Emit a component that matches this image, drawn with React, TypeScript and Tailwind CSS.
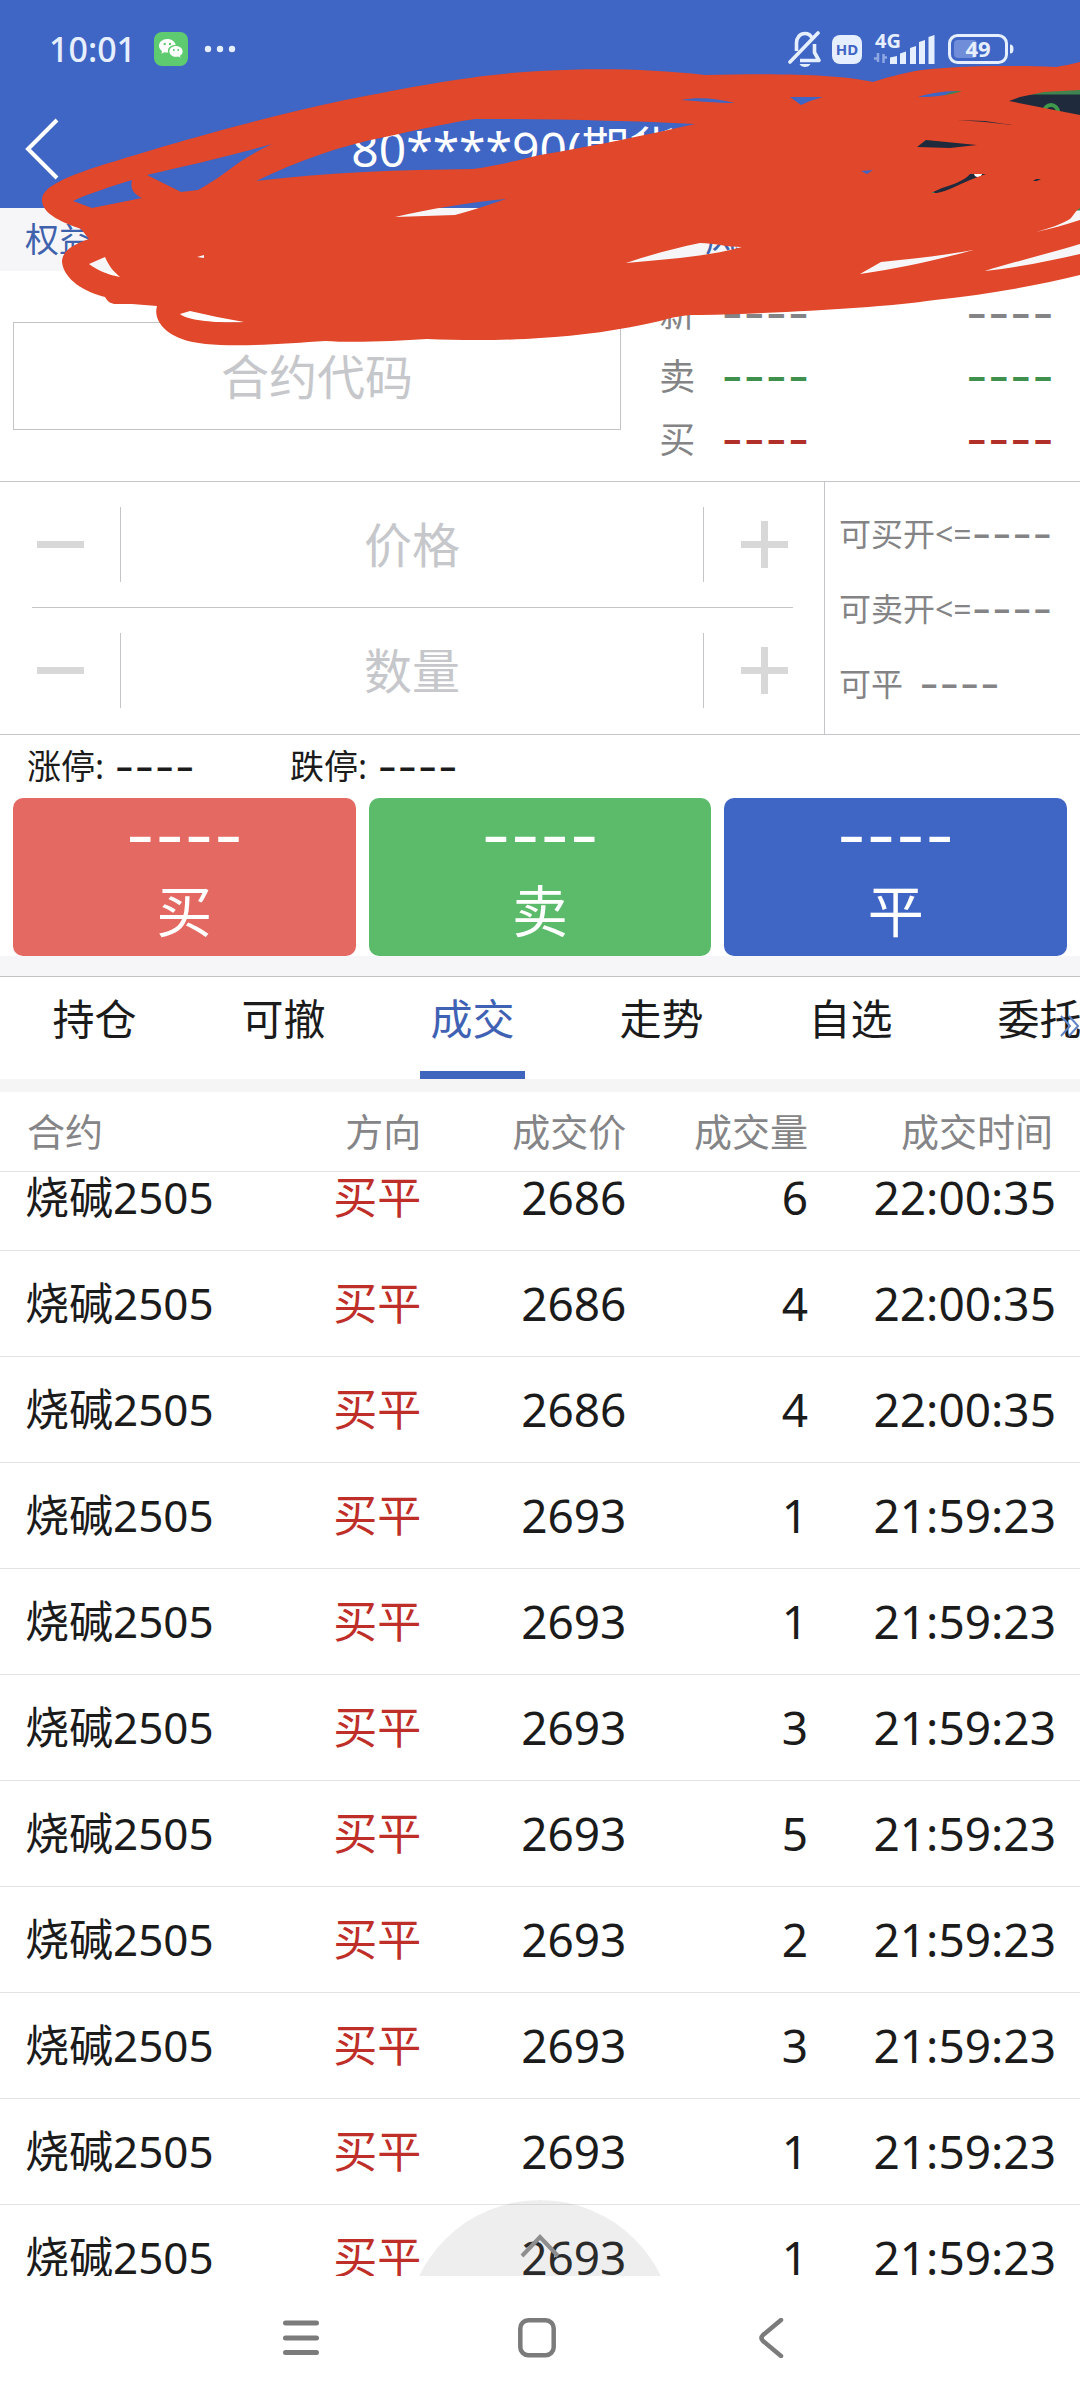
import { clsx } from 'clsx'

const quotes = [
  { label: '新', color: 'text-[#848486]' },
  { label: '卖', color: 'text-[#3f8f4d]' },
  { label: '买', color: 'text-[#b03029]' },
]

const actions = [
  { label: '买', color: 'bg-[#e36962]' },
  { label: '卖', color: 'bg-[#5cbb6b]' },
  { label: '平', color: 'bg-[#3f65c5]' },
]

const tabs = ['持仓', '可撤', '成交', '走势', '自选', '委托']

const trades = [
  { price: 2686, volume: 6, time: '22:00:35' },
  { price: 2686, volume: 4, time: '22:00:35' },
  { price: 2686, volume: 4, time: '22:00:35' },
  { price: 2693, volume: 1, time: '21:59:23' },
  { price: 2693, volume: 1, time: '21:59:23' },
  { price: 2693, volume: 3, time: '21:59:23' },
  { price: 2693, volume: 5, time: '21:59:23' },
  { price: 2693, volume: 2, time: '21:59:23' },
  { price: 2693, volume: 3, time: '21:59:23' },
  { price: 2693, volume: 1, time: '21:59:23' },
  { price: 2693, volume: 1, time: '21:59:23' },
]

function Dashes({ className }: { className?: string }) {
  return <span className={clsx('font-[Inter,sans-serif]', className)}>----</span>
}

function StatusBar() {
  return (
    <div className="flex h-[90px] items-center justify-between pt-2 pr-[65px] pl-[49px] text-[#e6efff]">
      <div className="flex items-center">
        <span className="w-[105px] text-[34px] leading-[48px] font-medium">10:01</span>
        <svg width="34" height="34" viewBox="0 0 34 34" aria-hidden="true">
          <rect width="34" height="34" rx="8" fill="#5fcb71" />
          <path
            d="M13.400 7c-4.900 0-8.400 3-8.400 6.800 0 2.200 1.200 4.100 3.100 5.400l-.7 2.500 3-1.500c1 .3 2 .4 3 .4h.8c-.2-.5-.3-1-.3-1.600 0-3.300 3.200-5.900 7.200-5.900h.6C21 9.500 17.600 7 13.400 7z"
            fill="#fff"
          />
          <path
            d="M28.600 19.400c0-3-3-5.400-6.600-5.400s-6.600 2.400-6.600 5.400 3 5.400 6.600 5.400c.8 0 1.600-.1 2.300-.3l2.200 1.200-.6-2c1.700-1 2.700-2.600 2.700-4.300z"
            fill="#fff"
          />
          <g fill="#5fcb71">
            <circle cx="10.700" cy="12" r="1.200" />
            <circle cx="16" cy="12" r="1.200" />
            <circle cx="19.800" cy="18" r="1" />
            <circle cx="24.200" cy="18" r="1" />
          </g>
        </svg>
        <svg className="ml-4" width="32" height="8" viewBox="0 0 32 8" fill="currentColor" aria-hidden="true">
          <circle cx="4" cy="4" r="3.200" />
          <circle cx="16" cy="4" r="3.200" />
          <circle cx="28" cy="4" r="3.200" />
        </svg>
      </div>
      <div className="flex items-center">
        <svg width="34" height="36" viewBox="0 0 34 36" fill="none" stroke="currentColor" strokeWidth="3.600" aria-hidden="true">
          <path d="M24 7C22.500 4 20 2.500 17 2.500c-5 0-8.500 4-8.500 9.500v8" />
          <path d="M26.500 13v8.500l4.500 8H12" strokeLinejoin="round" />
          <path d="M30 2 2 31" strokeLinecap="round" />
          <path d="M11.500 33h11c-1 2-3 3-5.500 3s-4.500-1-5.500-3z" fill="currentColor" stroke="none" />
        </svg>
        <span className="ml-[10px] flex h-[29px] w-[30px] items-center justify-center rounded-lg bg-[#e6efff] text-[15px] leading-5 font-bold text-[#3f65c5]">
          HD
        </span>
        <svg className="ml-3" width="62" height="32" viewBox="0 0 62 32" aria-hidden="true">
          <text x="1" y="15" fill="currentColor" fontSize="20" fontWeight="700">4G</text>
          <g fill="currentColor">
            <path d="M16 24.500 23 23v8h-7z" />
            <path d="m26 20.500 6-2V31h-6z" />
            <path d="m36 15 6-2v18h-6z" />
            <path d="m45 9 6-2v24h-6z" />
            <path d="m54.500 4 6-2v29h-6z" />
          </g>
          <path d="M4 20v9M0 25.500h4M9.500 21v9M13 24.500H9.500" stroke="#8fa8e4" strokeWidth="2.500" fill="none" />
        </svg>
        <svg className="ml-3" width="67" height="30" viewBox="0 0 67 30" fill="none" aria-hidden="true">
          <rect x="1.500" y="1.500" width="57" height="27" rx="8" stroke="currentColor" strokeWidth="3" />
          <rect x="6" y="6" width="23" height="18" rx="4" fill="#6f8dd8" />
          <path d="M62 10.500c2.500 0 3.500 1.500 3.500 4.500s-1 4.500-3.500 4.500z" fill="currentColor" />
          <text x="30" y="23" textAnchor="middle" fill="currentColor" fontSize="22" fontWeight="700">49</text>
        </svg>
      </div>
    </div>
  )
}

function Stepper({ id, label }: { id: string, label: string }) {
  return (
    <div className="flex h-[125px] items-center">
      <button type="button" aria-label={`${label}减`} className="flex h-[75px] w-[121px] shrink-0 items-center border-r border-[#c4c5c8] pl-[37px]">
        <span className="h-[7px] w-[47px] bg-[#d8d8d8]" />
      </button>
      <input
        id={id}
        aria-label={label}
        placeholder={label}
        className="h-[75px] min-w-0 flex-1 text-center text-[48px] outline-none placeholder:text-[#c6c7cb]"
      />
      <button type="button" aria-label={`${label}加`} className="flex h-[75px] w-[121px] shrink-0 items-center border-l border-[#c4c5c8] pl-[37px]">
        <svg width="47" height="47" viewBox="0 0 47 47" fill="#d8d8d8" aria-hidden="true">
          <path d="M20 0h7v20h20v7H27v20h-7V27H0v-7h20z" />
        </svg>
      </button>
    </div>
  )
}

// Floating ball that is docked to the right edge
function FloatingBall() {
  return (
    <svg className="absolute top-[88px] right-0" width="172" height="124" viewBox="0 0 172 124" fill="none" aria-hidden="true">
      <path d="M190 4H62a58 58 0 0 0 0 116h128z" fill="#1f2a3d" stroke="#3f8450" strokeWidth="5" />
      <circle cx="143" cy="24" r="7" stroke="#3f9a4c" strokeWidth="4" />
      <circle cx="70" cy="85" r="4" fill="#fff" />
    </svg>
  )
}

function Scribble() {
  return (
    <svg className="pointer-events-none absolute top-0 left-0 w-full" viewBox="0 0 1080 360" aria-hidden="true">
      <path
        fill="#e1472a"
        fillRule="evenodd"
        d="M1080 62C1072 64 1062 66 1056 67C1000 65 950 66 915 71C900 74 885 78 873 82C840 75 790 73 705 75C650 69 600 68 540 71C480 74 420 85 345 100C250 120 150 150 90 169C65 178 42 187 42 200C42 215 65 223 81 229L89 239C75 244 62 250 62 262C64 280 85 292 105 297C108 302 111 304 116 304H132L157 306C153 320 165 333 182 339C210 350 280 344 325 341C355 343 395 341 427 339C470 341 515 340 540 338C580 336 620 330 660 321C680 315 690 315 700 315C780 313 880 308 935 300C990 294 1040 285 1080 275V254C1050 261 1020 267 985 271C1010 263 1050 253 1080 244V220C1065 225 1050 229 1036 232C1050 228 1062 224 1070 219C1075 214 1075 211 1080 208V115L1009 101L1020 97L1044 92L1080 90Z
        M147 175C190 165 230 156 272 144C255 152 240 161 226 172C215 180 205 186 198 190L181 192Z
        M73 201C90 193 110 187 132 180C130 188 133 194 142 198L92 208Z
        M256 181C300 160 340 146 385 137C430 127 460 121 475 119C560 119 630 121 695 124C650 134 600 145 540 155C520 160 495 166 473 169C400 170 330 172 256 181Z
        M395 217C430 209 470 202 506 199C490 204 475 210 455 215Z
        M89 264L105 257C109 266 113 271 120 277C108 275 97 270 89 264Z
        M180 314L190 311C208 315 226 319 244 322C225 323 190 322 180 314Z
        M197 257L204 255V258Z
        M681 100C697 97 715 98 735 103C715 103 700 101 681 100Z
        M790 97H823L810 101L801 105Z
        M918 97C933 92 947 91 962 91C950 95 935 97 918 97Z
        M917 147L926 140L977 145L950 148Z
        M957 120L985 121L1012 125L985 122Z
        M931 193L942 188C955 184 965 180 970 174H986L975 178C960 184 948 191 937 193Z
        M861 171L873 170L867 174Z
        M1033 181L1036 179L1041 179L1037 181Z
        M626 263C650 255 675 248 700 243C715 243 725 247 742 247C710 256 670 259 626 263Z
        M860 274L881 262C910 259 940 256 973 250C930 262 900 268 860 274Z"
      />
    </svg>
  )
}

export default function App() {
  return (
    <div className="relative flex h-screen flex-col overflow-hidden bg-white font-['Noto_Sans','Noto_Sans_CJK_SC',sans-serif] text-[#1b1b1b]">
      <header className="h-[208px] bg-[#3f65c5] text-white">
        <StatusBar />
        <div className="flex h-[118px] items-center pl-[25px]">
          <button type="button" aria-label="返回">
            <svg width="34" height="62" viewBox="0 0 34 62" fill="none" stroke="currentColor" strokeWidth="4" aria-hidden="true">
              <path d="M32 2 3 31l29 29" />
            </svg>
          </button>
          <h1 className="flex-1 pr-[96px] text-center text-[48px] leading-[64px]">80****90(期货)</h1>
        </div>
      </header>

      <div className="flex h-[63px] items-center bg-[#f6f6f8] px-[25px] text-[34px] text-[#3f62ac]">
        <span className="w-[66%]">权益</span>
        <span>风险度</span>
      </div>

      <section className="flex h-[210px] pl-[13px]">
        <div className="w-[57%] pt-[51px]">
          <input
            aria-label="合约代码"
            placeholder="合约代码"
            className="h-[108px] w-full border border-[#c1c5c6] text-center text-[48px] outline-none placeholder:text-[#c6c7cb]"
          />
        </div>
        <ul className="flex-1 pt-[11px] pr-[26px] pl-[38px]">
          {quotes.map(quote => (
            <li key={quote.label} className="flex h-[63px] items-center text-[36px] text-[#848486]">
              <span className="w-[62px]">{quote.label}</span>
              <Dashes className={clsx('flex-1 text-[48px] leading-none', quote.color)} />
              <Dashes className={clsx('text-[48px] leading-none', quote.color)} />
            </li>
          ))}
        </ul>
      </section>

      <section className="flex h-[254px] border-y border-[#c4c5c8]">
        <div className="min-w-0 flex-1">
          <Stepper id="price" label="价格" />
          <hr className="mr-[31px] ml-8 border-[#c4c5c8]" />
          <Stepper id="amount" label="数量" />
        </div>
        <div className="flex w-[256px] shrink-0 flex-col border-l border-[#c4c5c8] pt-[14px] pl-[14px] text-[32px] whitespace-nowrap text-[#848486]">
          <p className="flex h-[75px] items-center">
            可买开&lt;=<Dashes className="text-[44px] leading-none" />
          </p>
          <p className="flex h-[75px] items-center">
            可卖开&lt;=<Dashes className="text-[44px] leading-none" />
          </p>
          <p className="flex h-[75px] items-center gap-4">
            可平<Dashes className="text-[44px] leading-none" />
          </p>
        </div>
      </section>

      <div className="flex h-[63px] items-center px-[27px] text-[34px]">
        <p className="flex w-[263px] items-center gap-[10px]">
          涨停:<Dashes className="text-[44px] leading-none" />
        </p>
        <p className="flex items-center gap-[10px]">
          跌停:<Dashes className="text-[44px] leading-none" />
        </p>
      </div>

      <div className="flex gap-[13px] px-[13px]">
        {actions.map(action => (
          <button
            key={action.label}
            type="button"
            className={clsx('flex h-[158px] flex-1 flex-col items-center rounded-[10px] pt-[6px] text-white', action.color)}
          >
            <Dashes className="text-[64px] leading-[64px]" />
            <span className="text-[56px] leading-[84px]">{action.label}</span>
          </button>
        ))}
      </div>

      <div className="h-5 shrink-0 bg-[#f6f6f8]" />

      <nav className="relative flex h-[103px] shrink-0 overflow-hidden border-t border-[#c1c3c5]">
        {tabs.map(tab => (
          <button
            key={tab}
            type="button"
            className={clsx('flex w-[17.5%] shrink-0 flex-col items-center justify-between pt-[10px] text-[42px] leading-[64px]', tab === '成交' && 'text-[#3f62b4]')}
          >
            {tab}
            {tab === '成交' && <span className="h-2 w-[105px] bg-[#3f65bd]" />}
          </button>
        ))}
        <svg className="absolute right-0 bottom-[42px]" width="20" height="22" viewBox="0 0 20 22" fill="none" stroke="#5f83c4" strokeWidth="2" aria-hidden="true">
          <path d="m1 1 9 10-9 10M9 1l9 10-9 10" />
        </svg>
      </nav>

      <div className="h-[13px] shrink-0 bg-[#f5f5f5]" />

      <main className="relative min-h-0 flex-1 overflow-hidden">
        <table className="w-full table-fixed text-[44px] leading-none">
          <thead>
            <tr className="h-[79px] border-b border-[#e3e3e5] text-right text-[38px] text-[#858587]">
              <th className="w-[25%] pl-[27px] text-left font-normal">合约</th>
              <th className="w-[14%] font-normal">方向</th>
              <th className="w-[19%] font-normal">成交价</th>
              <th className="w-[17%] pr-[2px] font-normal">成交量</th>
              <th className="pr-[27px] font-normal">成交时间</th>
            </tr>
          </thead>
          <tbody>
            {trades.map((trade, i) => (
              <tr
                key={i}
                className="h-[106px] border-b border-[#e3e3e5] text-right first:h-[79px] first:[&>td]:pb-[27px]"
              >
                <td className="pl-[25px] text-left">烧碱2505</td>
                <td className="text-[#bf2f29]">买平</td>
                <td className="text-[46px]">{trade.price}</td>
                <td className="pr-[2px] text-[46px]">{trade.volume}</td>
                <td className="pr-6 text-[46px]">{trade.time}</td>
              </tr>
            ))}
          </tbody>
        </table>
        <button
          type="button"
          aria-label="展开"
          className="absolute -bottom-[192px] left-1/2 flex size-[268px] -translate-x-1/2 justify-center rounded-full bg-[#868686]/14 pt-[34px]"
        >
          <svg width="40" height="24" viewBox="0 0 40 24" fill="none" stroke="#8e8e8e" strokeWidth="4" aria-hidden="true">
            <path d="M2 22 20 3l18 19" />
          </svg>
        </button>
      </main>

      <footer className="flex h-[124px] shrink-0 items-center justify-center gap-[198px] pr-[6px] text-[#7b7b7b]">
        <button type="button" aria-label="菜单">
          <svg width="38" height="40" viewBox="0 0 38 40" stroke="currentColor" strokeWidth="5" strokeLinecap="round" aria-hidden="true">
            <path d="M3.500 5h31M3.500 20h31M3.500 34.500h31" />
          </svg>
        </button>
        <button type="button" aria-label="主页">
          <svg width="38" height="40" viewBox="0 0 38 40" fill="none" stroke="currentColor" strokeWidth="4.500" aria-hidden="true">
            <rect x="2.300" y="2.300" width="33.400" height="35" rx="8" />
          </svg>
        </button>
        <button type="button" aria-label="后退">
          <svg width="38" height="40" viewBox="0 0 38 40" fill="none" stroke="currentColor" strokeWidth="4.500" strokeLinecap="round" aria-hidden="true">
            <path d="M27 2 9 17q-3 3 0 6L27 38" />
          </svg>
        </button>
      </footer>

      <FloatingBall />
      <Scribble />
    </div>
  )
}
